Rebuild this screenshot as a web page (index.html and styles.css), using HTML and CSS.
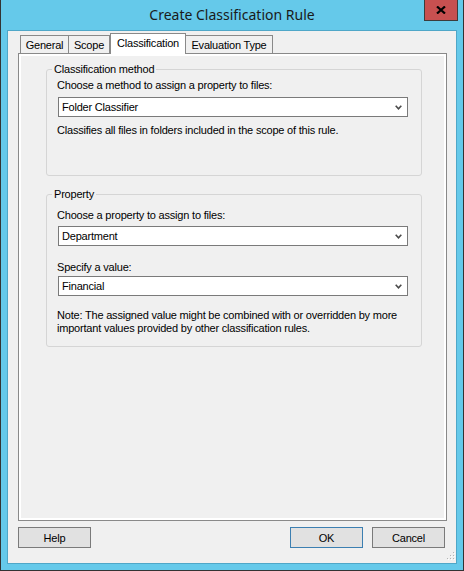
FILE: index.html
```html
<!DOCTYPE html>
<html lang="en">
<head>
  <meta charset="UTF-8">
  <meta name="viewport" content="width=device-width, initial-scale=1.0">
  <title>Create Classification Rule</title>
  <link rel="stylesheet" href="styles.css">
</head>
<body>
  <div class="window">
    <div class="titlebar">
      <span class="title">Create Classification Rule</span>
      <div class="close">
        <svg width="10" height="8" viewBox="0 0 10 8">
          <path d="M1 0.5 L9 7.5 M9 0.5 L1 7.5" stroke="#000" stroke-width="2.2" fill="none"/>
        </svg>
      </div>
    </div>

    <div class="client">
      <div class="tabs">
        <div class="tab tab-general">General</div>
        <div class="tab tab-scope">Scope</div>
        <div class="tab tab-class active">Classification</div>
        <div class="tab tab-eval">Evaluation Type</div>
      </div>

      <div class="panel">
        <div class="page">
          <fieldset class="group group-method">
            <legend>Classification method</legend>
            <div class="label">Choose a method to assign a property to files:</div>
            <div class="combo">
              <span>Folder Classifier</span>
              <svg class="arrow" width="7" height="5" viewBox="0 0 7 5">
                <path d="M0.7 0.7 L3.5 3.8 L6.3 0.7" stroke="#4a4a4a" stroke-width="1.6" fill="none"/>
              </svg>
            </div>
            <div class="desc">Classifies all files in folders included in the scope of this rule.</div>
          </fieldset>

          <fieldset class="group group-property">
            <legend>Property</legend>
            <div class="label">Choose a property to assign to files:</div>
            <div class="combo">
              <span>Department</span>
              <svg class="arrow" width="7" height="5" viewBox="0 0 7 5">
                <path d="M0.7 0.7 L3.5 3.8 L6.3 0.7" stroke="#4a4a4a" stroke-width="1.6" fill="none"/>
              </svg>
            </div>
            <div class="label label-value">Specify a value:</div>
            <div class="combo combo-value">
              <span>Financial</span>
              <svg class="arrow" width="7" height="5" viewBox="0 0 7 5">
                <path d="M0.7 0.7 L3.5 3.8 L6.3 0.7" stroke="#4a4a4a" stroke-width="1.6" fill="none"/>
              </svg>
            </div>
            <div class="note">Note: The assigned value might be combined with or overridden by more<br>important values provided by other classification rules.</div>
          </fieldset>
        </div>
      </div>

      <div class="buttons">
        <button class="btn">Help</button>
        <button class="btn btn-ok">OK</button>
        <button class="btn">Cancel</button>
      </div>

      <svg class="grip" width="12" height="12" viewBox="0 0 12 12">
        <rect x="9" y="1" width="1" height="1" fill="#b4b4b4"/>
        <rect x="6" y="4" width="1" height="1" fill="#b4b4b4"/>
        <rect x="9" y="4" width="1" height="1" fill="#b4b4b4"/>
        <rect x="3" y="7" width="1" height="1" fill="#b4b4b4"/>
        <rect x="6" y="7" width="1" height="1" fill="#b4b4b4"/>
        <rect x="9" y="7" width="1" height="1" fill="#b4b4b4"/>
        <rect x="10" y="2" width="1" height="1" fill="#fff"/>
        <rect x="7" y="5" width="1" height="1" fill="#fff"/>
        <rect x="10" y="5" width="1" height="1" fill="#fff"/>
        <rect x="4" y="8" width="1" height="1" fill="#fff"/>
        <rect x="7" y="8" width="1" height="1" fill="#fff"/>
        <rect x="10" y="8" width="1" height="1" fill="#fff"/>
      </svg>
    </div>
  </div>
</body>
</html>
```

FILE: styles.css
```css
* {
  box-sizing: border-box;
}
body {
  margin: 0;
  font-family: "Liberation Sans", Arial, sans-serif;
  font-size: 11px;
  line-height: 13px;
  letter-spacing: -0.2px;
  color: #000;
}
.window {
  width: 464px;
  height: 571px;
  background: #65c9ea;
  border: 1px solid #333;
  border-top: none;
}
.titlebar {
  position: relative;
  height: 30px;
  text-align: center;
}
.title {
  font-family: "Noto Sans", sans-serif;
  font-size: 14px;
  line-height: 30px;
  letter-spacing: 0;
  color: #1a1a1a;
}
.close {
  position: absolute;
  top: 0;
  right: 5px;
  width: 34px;
  height: 21px;
  background: #c75050;
  border: 1px solid #3c3c3c;
  border-top: none;
  display: flex;
  align-items: center;
  justify-content: center;
}
.client {
  position: relative;
  height: 534px;
  margin: 0 6px;
  background: #f0f0f0;
  border: 1px solid #4fa7c8;
  padding-top: 2px;
  display: flex;
  flex-direction: column;
}
/* Tabs */
.tabs {
  display: flex;
  align-items: flex-end;
  height: 20px;
  margin-left: 10px;
  padding-left: 2px;
}
.tab {
  height: 18px;
  padding-top: 1px;
  line-height: 16px;
  text-align: center;
  background: #f0f0f0;
  border: 1px solid #898989;
  border-bottom: none;
}
.tab-general { width: 49px; }
.tab-scope { width: 41px; border-left: none; }
.tab-class { width: 76px; }
.tab-eval { width: 87px; border-left: none; }
.tab.active {
  position: relative;
  z-index: 1;
  height: 21px;
  margin-bottom: -1px;
  padding-top: 2px;
  line-height: 15px;
  background: #fff;
}
.panel {
  width: 429px;
  height: 468px;
  margin-left: 10px;
  border: 1px solid #898989;
  background: #fff;
  padding: 2px;
}
.page {
  height: 100%;
  background: #f0f0f0;
  padding: 7px 22px 0 25px;
}
/* Group boxes */
.group {
  margin: 0;
  border: 1px solid #d5d5d5;
  border-radius: 3px;
  padding: 3px 13px 38px 11px;
  min-width: 0;
}
.group legend {
  padding: 0 2px;
  margin-left: -6px;
  line-height: 13px;
}
.group-property {
  margin-top: 12px;
  padding-top: 8px;
  padding-bottom: 11px;
}
.label {
  margin-left: -1px;
}
.combo {
  display: flex;
  align-items: center;
  justify-content: space-between;
  height: 20px;
  margin-top: 5px;
  padding: 0 5px 0 3px;
  background: #fff;
  border: 1px solid #7a7a7a;
}
.group-property .combo {
  margin-top: 4px;
}
.group-property .label-value {
  margin-top: 15px;
}
.group-property .combo-value {
  margin-top: 2px;
}
.desc {
  margin-top: 7px;
  margin-left: -1px;
}
.note {
  margin-top: 13px;
  margin-left: -1px;
  white-space: nowrap;
}
/* Buttons */
.buttons {
  display: flex;
  gap: 9px;
  margin: 6px 11px 0 10px;
}
.btn {
  width: 73px;
  height: 21px;
  padding: 0;
  font-family: inherit;
  font-size: 11px;
  letter-spacing: inherit;
  color: #000;
  background: #e1e1e1;
  border: 1px solid #7a7a7a;
}
.btn-ok {
  margin-left: auto;
  border-color: #3c7fb1;
}
.grip {
  position: absolute;
  right: 0;
  bottom: 0;
}
```
